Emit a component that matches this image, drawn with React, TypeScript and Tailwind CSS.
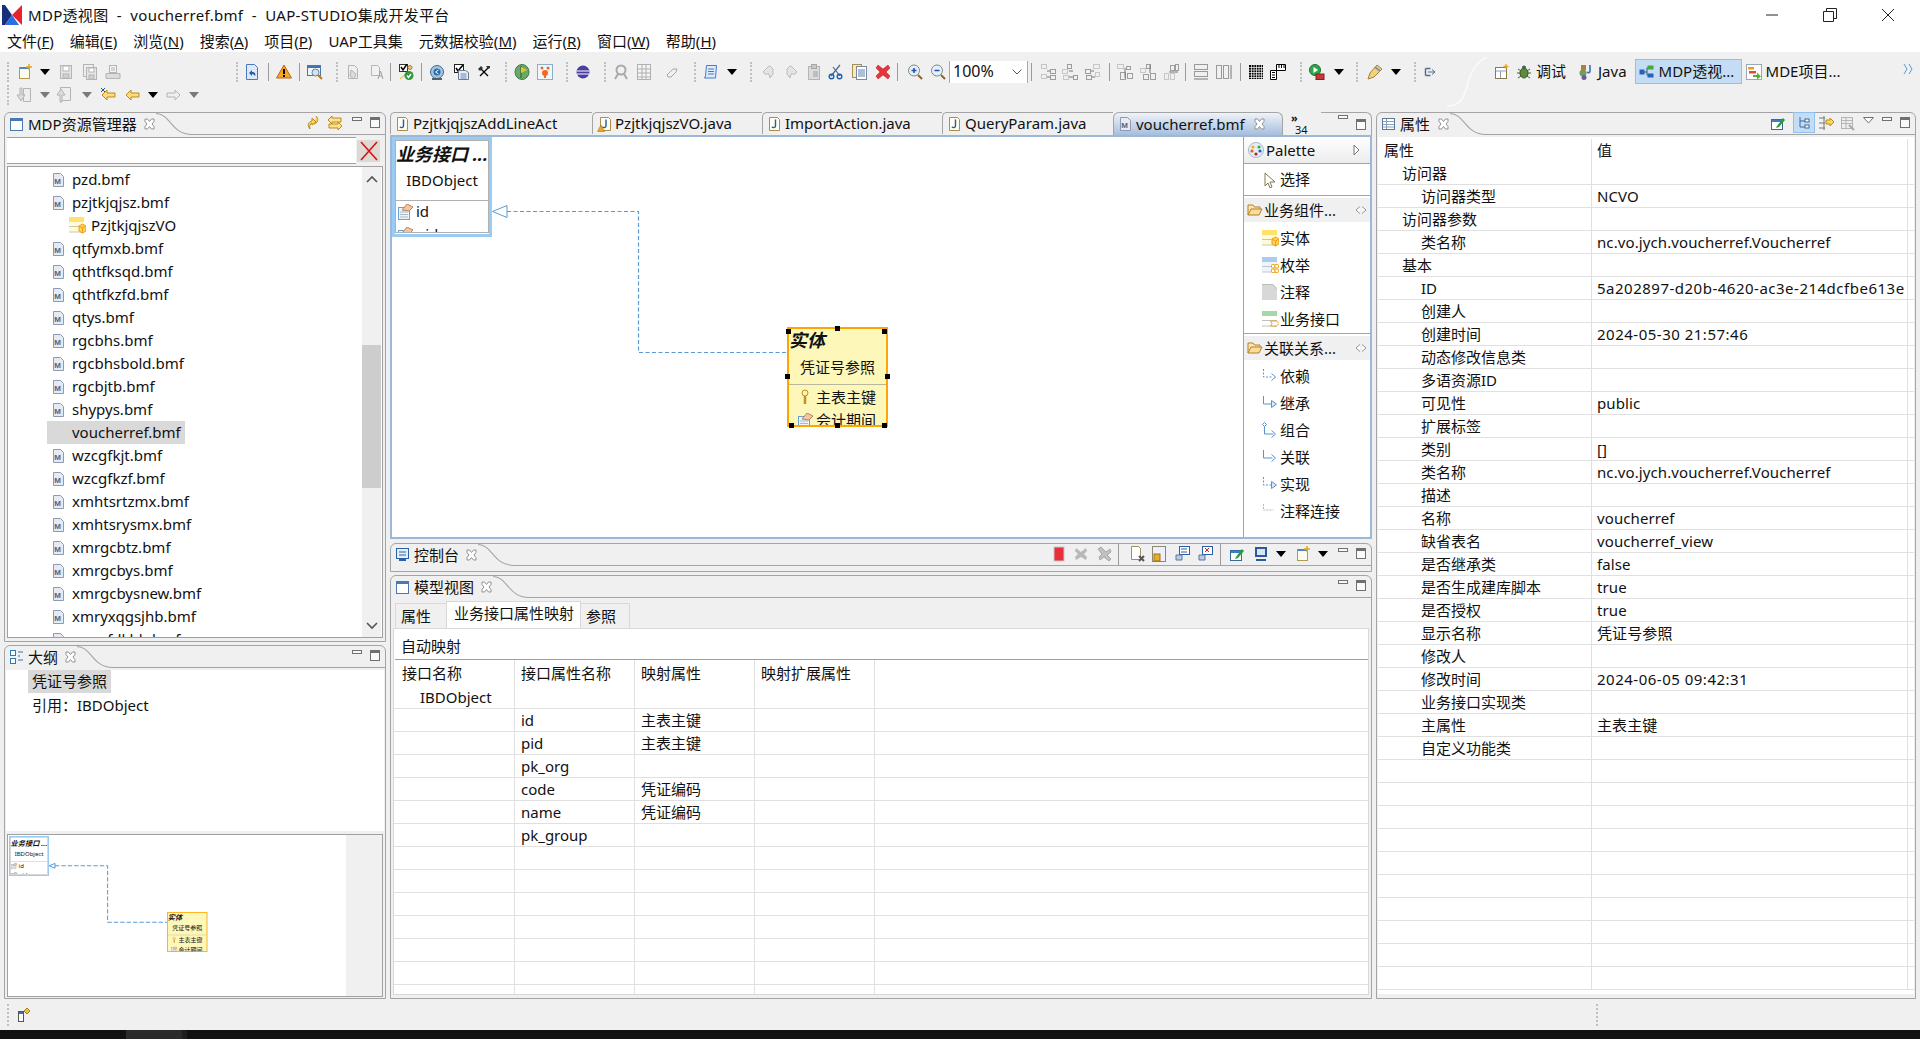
import React from 'react';

type C = { c?: string };
const S = ({ c = '', w = 16, h = 16, children }: { c?: string; w?: number; h?: number; children: React.ReactNode }) => (
  <svg width={w} height={h} viewBox={`0 0 ${w} ${h}`} className={`block shrink-0 ${c}`}>{children}</svg>
);
const mk = (body: React.ReactNode) => ({ c }: C) => <S c={c}>{body}</S>;

const Grip = ({ c = '' }: C) => <div className={`h-[20px] w-[2px] shrink-0 border-l-2 border-dotted border-[#c0c0c0] ${c}`} />;
const Sep = ({ c = '' }: C) => <div className={`h-[18px] w-[1px] shrink-0 bg-[#9a9a9a] ${c}`} />;
const Drop = ({ c = '', gray = false }: C & { gray?: boolean }) => (
  <S c={c} w={10} h={6}><path d="M0 0h10L5 6z" fill={gray ? '#7a7a7a' : '#000'} /></S>
);

const G = '#b4b4b4';
const NewFile = mk(<><rect x="2.5" y="3.5" width="10" height="11" fill="#fdfcec" stroke="#b39a50" /><rect x="3" y="3" width="9" height="2" fill="#4f86c6" /><path d="M12 0v6M9 3h6" stroke="#e0a820" strokeWidth="1.5" /></>);
const Save = mk(<><rect x="2.5" y="1.5" width="11" height="13" fill="#e6e6e6" stroke={G} /><rect x="5" y="2" width="6" height="5" fill="#fff" stroke={G} /><rect x="5" y="10" width="6" height="4" fill="#d0d0d0" stroke={G} /></>);
const SaveAll = mk(<><rect x="1.5" y="0.5" width="10" height="12" fill="#eee" stroke={G} /><rect x="4.5" y="3.5" width="10" height="12" fill="#e6e6e6" stroke={G} /><rect x="7" y="4" width="5" height="4" fill="#fff" stroke={G} /><rect x="7" y="11" width="5" height="4" fill="#d0d0d0" stroke={G} /></>);
const Print = mk(<><rect x="4.5" y="1.5" width="7" height="7" fill="#f4f4f4" stroke={G} /><path d="M1 9.5h14v5H1z" fill="#dcdcdc" stroke={G} /><path d="M6 4h4M6 6h4" stroke={G} /></>);
const DocUndo = mk(<><path d="M2.5.5h8l3 3v12h-11z" fill="#dde8f8" stroke="#4a78c0" /><path d="M5 9l3-3v2c3 0 4 2 3 4-1-1.500-2-2-3-2v2z" fill="#1f5fb0" /></>);
const Warn = mk(<><path d="M8 1l7.500 13H.5z" fill="#f6a623" stroke="#b8651a" /><rect x="7" y="5" width="2" height="5" /><rect x="7" y="11" width="2" height="2" /></>);
const SearchWin = mk(<><rect x="0.500" y="1.500" width="13" height="10" fill="#eef3fa" stroke="#4a78a8" /><rect x="1" y="2" width="12" height="2" fill="#3f74b0" /><circle cx="8.500" cy="8.500" r="3.500" fill="#cfe4f6" stroke="#70808c" /><path d="M11 11l4 4" stroke="#b87a20" strokeWidth="2" /></>);
const GrayHand = mk(<><path d="M3.500 1.500h6l3 3v10h-9z" fill="#eee" stroke={G} /><path d="M6 6l5 4-2 5-4-3z" fill="#ddd" stroke={G} /></>);
const GrayDocA = mk(<><path d="M2.500 1.500h6l2 2v8h-8z" fill="#f2f2f2" stroke={G} /><path d="M9 15l2.500-8 2.500 8M10 12h3" fill="none" stroke="#a0a0a0" /></>);
const CheckPair = mk(<><rect x="1.500" y="0.500" width="8" height="7" fill="#fff" stroke="#333" /><path d="M3 3l2 3 4-6" fill="none" stroke="#000" strokeWidth="1.500" /><circle cx="12" cy="3.500" r="2" fill="#e7d07a" stroke="#a08030" /><path d="M2 15l8-7" stroke="#d8b040" /><circle cx="11" cy="11.500" r="4.500" fill="#2a9a3a" /><path d="M9 11.500l1.500 2 2.500-3.500" fill="none" stroke="#fff" strokeWidth="1.500" /></>);
const Alarm = mk(<><circle cx="8" cy="8" r="6.500" fill="#9fc6e4" stroke="#3a6a94" /><circle cx="8" cy="8" r="3.500" fill="#2c6aa4" /><path d="M9.500 6l-3 2 3 2" fill="none" stroke="#fff" /><rect x="3" y="14" width="10" height="2" fill="#56606a" /></>);
const CheckDoc = mk(<><rect x="1.500" y="0.500" width="9" height="8" fill="#fff" stroke="#222" /><path d="M3 4l2 3 5-6" fill="none" stroke="#000" strokeWidth="1.500" /><path d="M5.500 6.500h7l3 2v7h-10z" fill="#e8eef6" stroke="#6a7a90" /><path d="M7.500 10h6M7.500 12h6M7.500 14h6" stroke="#6a88ac" /></>);
const Tools = mk(<><path d="M4 4l8 8M12 4l-8 8" stroke="#000" strokeWidth="1.300" /><path d="M2 5l3-3 2 2-3 3zM10 2h4v2l-2 1z" fill="#333" /></>);
const Leaf = mk(<><ellipse cx="8" cy="8" rx="7" ry="7.500" fill="#6aa86a" stroke="#3c7a4c" /><path d="M7 2v12" stroke="#2a5a30" /><path d="M7 3l6 3-6 3z" fill="#f2c318" /></>);
const OrangeBox = mk(<><rect x="0.500" y="0.500" width="15" height="15" fill="#f0f6fb" stroke="#8ab0cc" /><circle cx="8" cy="9" r="3" fill="#f2681f" /><circle cx="5" cy="4" r="1.500" fill="#f2681f" /><circle cx="11" cy="4" r="1.500" fill="#f2681f" /><path d="M8 9v5" stroke="#f2681f" strokeWidth="2" /></>);
const Globe = mk(<><circle cx="8" cy="8" r="6.500" fill="#4a3f9f" /><path d="M1.500 7h13M2 10h12" stroke="#fff" /></>);
const GrayFinder = mk(<><circle cx="8" cy="6" r="4.500" fill="#f0f0f0" stroke="#a8a8a8" strokeWidth="2" /><path d="M5 10l-3 5M11 10l3 5" stroke="#a8a8a8" strokeWidth="2" /></>);
const GrayGrid = mk(<><rect x="1.500" y="0.500" width="13" height="15" fill="#f4f4f4" stroke="#b0b0b0" /><path d="M6 1v14M10 1v14M2 5h12M2 9h12M2 13h12" stroke="#b0b0b0" /></>);
const GrayEraser = mk(<path d="M3 11l6-6h4l-1 3-5 5H4z" fill="#f0f0f0" stroke="#a8a8a8" />);
const Scroll = mk(<><path d="M3.500 1.500h10l-1 12.500H1.500l1-2z" fill="#dfeafa" stroke="#3f7ccc" /><path d="M5 5h6M5 7.500h6M5 10h6" stroke="#3f7ccc" /></>);
const UndoG = mk(<path d="M9 2l3 3v5l-3 4-1-4H4l-2-2 6-6z" fill="#e4e4e4" stroke="#bcbcbc" />);
const RedoG = mk(<path d="M7 2L4 5v5l3 4 1-4h4l2-2-6-6z" fill="#e4e4e4" stroke="#bcbcbc" />);
const Clip = mk(<><rect x="2.500" y="2.500" width="11" height="13" fill="#dcdcdc" stroke={G} /><rect x="5.500" y="0.500" width="5" height="4" fill="#c8c8c8" stroke="#a8a8a8" /><path d="M7 8h5M7 10h5M7 12h5" stroke="#a0a0a0" /></>);
const Scissors = mk(<><path d="M3 12L12 1M12 12L5 3" stroke="#4a6a8a" strokeWidth="1.200" /><circle cx="3.500" cy="12.500" r="2.300" fill="none" stroke="#1f5fb0" strokeWidth="1.400" /><circle cx="11.500" cy="12.500" r="2.300" fill="none" stroke="#1f5fb0" strokeWidth="1.400" /></>);
const CopyDoc = mk(<><rect x="0.500" y="0.500" width="9" height="13" fill="#f6e9c8" stroke="#a89050" /><rect x="4.500" y="2.500" width="10" height="13" fill="#fff" stroke="#7a8aa0" /><path d="M6 6h7M6 8h7M6 10h7M6 12h7" stroke="#5a80b0" /></>);
const RedX = mk(<path d="M3 1l5 4 5-4 2 3-4 4 4 4-2 3-5-4-5 4-2-3 4-4-4-4z" fill="#e8343c" stroke="#c02028" strokeWidth=".5" />);
const ZoomIn = mk(<><circle cx="7" cy="6.500" r="5.500" fill="#e6f0fa" stroke="#7c8a7c" /><path d="M4.500 6.500h5M7 4v5" stroke="#2050b0" strokeWidth="1.500" /><path d="M11 11l4 4" stroke="#8a6030" strokeWidth="2" /></>);
const ZoomOut = mk(<><circle cx="7" cy="6.500" r="5.500" fill="#e6f0fa" stroke="#7c8a7c" /><path d="M4.500 6.500h5" stroke="#2050b0" strokeWidth="1.500" /><path d="M11 11l4 4" stroke="#8a6030" strokeWidth="2" /></>);
const Box = ({ x, y, w = 4, h = 4, d = false }: { x: number; y: number; w?: number; h?: number; d?: boolean }) => (
  <rect x={x + 0.5} y={y + 0.5} width={w} height={h} fill="none" stroke="#9c9c9c" strokeDasharray={d ? '1 1' : undefined} />
);
const Align1 = mk(<><Box x={1} y={0} w={5} d /><Box x={10} y={5} w={5} /><Box x={1} y={10} w={5} d /><Box x={10} y={11} w={5} /><path d="M7 7h3M7 13h3" stroke="#777" /></>);
const Align2 = mk(<><Box x={5} y={0} /><Box x={0} y={5} w={5} d /><Box x={11} y={11} /><Box x={1} y={11} w={5} d /><path d="M7 7h4M7 13h4" stroke="#777" /></>);
const Align3 = mk(<><Box x={8} y={0} w={6} d /><Box x={0} y={5} w={5} /><Box x={10} y={8} d /><Box x={1} y={11} w={5} /><path d="M6 7h3M7 13h3" stroke="#777" /></>);
const Align4 = mk(<><Box x={0} y={0} w={6} d /><Box x={9} y={2} w={4} h={3} /><Box x={3} y={8} w={5} h={7} /><Box x={10} y={9} w={5} h={5} /><path d="M8 4v10" stroke="#777" /></>);
const Align5 = mk(<><Box x={6} y={0} /><Box x={0} y={4} w={5} d /><Box x={3} y={10} w={5} h={5} /><Box x={10} y={9} w={5} h={6} /><path d="M10 1v8" stroke="#777" /></>);
const Align6 = mk(<><Box x={7} y={1} w={4} h={5} /><Box x={12} y={0} w={3} h={6} /><Box x={1} y={9} w={4} h={6} d /><Box x={7} y={9} w={4} h={6} d /><path d="M6 8h9" stroke="#777" /></>);
const SizeH = mk(<><rect x="1.500" y="0.500" width="13" height="5" fill="none" stroke="#999" /><rect x="1.500" y="7.500" width="13" height="5" fill="none" stroke="#999" /><path d="M1 15h14" stroke="#777" /></>);
const SizeV = mk(<><rect x="0.500" y="1.500" width="5" height="13" fill="none" stroke="#999" /><rect x="7.500" y="1.500" width="5" height="13" fill="none" stroke="#999" /><path d="M15 1v14" stroke="#777" /></>);
const GridB = mk(<><rect x="1" y="1" width="14" height="14" /><path d="M3.500 1v14M6 1v14M8.500 1v14M11 1v14M13.500 1v14M1 3.500h14M1 6h14M1 8.500h14M1 11h14M1 13.500h14" stroke="#fff" strokeWidth=".7" /></>);
const Ruler = mk(<><path d="M.5 15.500V6.500h6v-6h9v6H6.500v9z" fill="#fff" stroke="#000" /><path d="M2 8.500h3M2 11h3M2 13.500h3M9 1v3M11.500 1v3M14 1v3" stroke="#000" /></>);
const RunTool = mk(<><circle cx="6" cy="6" r="5.500" fill="#2ea84a" stroke="#1c7030" /><path d="M4.500 3l4.500 3-4.500 3z" fill="#fff" /><rect x="7" y="10" width="8" height="5.500" fill="#c83838" stroke="#802020" /></>);
const Pen = mk(<><path d="M1 15l2-6 7-8 5 4-8 8z" fill="#f2d27c" stroke="#a88038" /><path d="M8 3l5 4" stroke="#7a96b0" strokeWidth="2" /></>);
const GoBox = mk(<><path d="M3.500 4.500h5M3.500 11.500h5M3.500 4.500v7" stroke="#52708a" strokeWidth="1.500" fill="none" /><path d="M6 8h7M10 5.500l3 2.500-3 2.500" stroke="#52708a" fill="none" /></>);
const OpenPersp = mk(<><rect x="1.500" y="3.500" width="11" height="11" fill="#fff" stroke="#8a7a50" /><path d="M2 7h10M6.500 7v7" stroke="#8aa0b8" /><path d="M12 0v5M9.500 2.500h5" stroke="#e0a820" strokeWidth="1.300" /></>);
const Bug = mk(<><ellipse cx="8" cy="9" rx="4" ry="5" fill="#5f8a3a" stroke="#38502a" /><circle cx="8" cy="3.500" r="2" fill="#3a6a40" /><path d="M2 5l3 2M14 5l-3 2M1 9h3M15 9h-3M2 14l3-2M14 14l-3-2" stroke="#4a5a3a" /></>);
const JavaP = mk(<><rect x="4" y="1" width="5" height="5" fill="#b87a40" /><circle cx="6" cy="9" r="3.500" fill="#7a9a58" /><circle cx="7" cy="13.500" r="2.500" fill="#6a5aa0" /><path d="M13 1v6c0 2-2 2-3 1" fill="none" stroke="#3a70b8" strokeWidth="1.600" /></>);
const MdpP = mk(<><rect x="0.500" y="5.500" width="5" height="5" fill="#2a60b8" /><rect x="8.500" y="1.500" width="6" height="4" fill="#4aa83a" /><rect x="8.500" y="9.500" width="6" height="4" fill="#2a60b8" /><path d="M5 8h3V3.500M8 8v3.500" stroke="#305880" fill="none" /></>);
const MdeP = mk(<><rect x="0.500" y="0.500" width="15" height="15" fill="#fff" stroke="#9aa8b8" /><rect x="2" y="3" width="6" height="2.500" fill="#e0a020" /><rect x="3" y="7" width="7" height="2.500" fill="#e04a30" /><path d="M7 11h4V8.500l4 4-4 3V13H7z" fill="#58b030" /></>);

const Chevron = ({ c = '' }: C) => <S c={c} w={12} h={12}><path d="M1 5l5-3 5 3M1 10l5-3 5 3" fill="none" stroke="#5a9ad8" transform="rotate(90 6 6)" /></S>;
const Min = ({ c = '' }: C) => <div className={`h-[4px] w-[10px] shrink-0 self-start border border-[#707070] bg-[#f8f8f8] ${c}`} />;
const Max = ({ c = '' }: C) => (
  <div className={`h-[11px] w-[10px] shrink-0 border border-[#707070] bg-[#fafafa] ${c}`}><div className="h-[2px] bg-[#707070]" /></div>
);
const Close = ({ c = '' }: C) => (
  <S c={c} w={13} h={13}><path d="M2 1h2.500L6.500 3.500 8.500 1H11v2.500L9 6l2 2.500V11H8.500l-2-2.500-2 2.500H2V8.500L4 6 2 3.500z" fill="#fff" stroke="#909090" /></S>
);

const Bmf = ({ c = '' }: C) => (
  <S c={c}>
    <path d="M2.500 1.500h7l3 3v10h-10z" fill="#e6eaf2" stroke="#8f9ab0" />
    <text x="3.200" y="12" fontSize="8" fontWeight="700" fill="#56627c" fontFamily="Liberation Sans">M</text>
  </S>
);
const JavaDoc = ({ c = '' }: C) => (
  <S c={c}>
    <path d="M2.500 1.500h8l2 2v11h-10z" fill="#fffef2" stroke="#a88c50" />
    <path d="M8.500 3.500V10c0 2-3 2-3.500.8" fill="none" stroke="#2a58a8" strokeWidth="1.400" />
  </S>
);
const WarnJava = ({ c = '' }: C) => (
  <S c={c}>
    <path d="M3.500 1.500h8l2 2v11h-10z" fill="#fffef2" stroke="#a88c50" />
    <path d="M9 3.500V10c0 2-3 2-3.500.8" fill="none" stroke="#2a58a8" strokeWidth="1.400" />
    <path d="M4 9l3.500 6.500H.5z" fill="#f0a820" stroke="#a87010" strokeWidth=".6" />
  </S>
);
const EntIcon = ({ c = '' }: C) => (
  <S c={c} w={17} h={17}>
    <rect x="0" y="0" width="15" height="15" fill="#fffbd8" />
    <rect x="0" y="0" width="15" height="5" fill="#fde26c" />
    <path d="M0 9.500h15M0 15h15" stroke="#c8c8b0" />
    <path d="M10 9l3.500-2 3.500 2v5l-3.500 2-3.500-2z" fill="#ffd35a" stroke="#f0a010" />
    <path d="M10 9l3.500 2 3.500-2M13.500 11v5" stroke="#f0a010" fill="none" />
  </S>
);
const EnumIcon = ({ c = '' }: C) => (
  <S c={c} w={17} h={17}>
    <rect x="0" y="0" width="15" height="15" fill="#eef4fb" />
    <rect x="0" y="0" width="15" height="5" fill="#a8cdf0" />
    <path d="M0 9.500h15M0 15h15" stroke="#c0c8d0" />
    <rect x="9.500" y="7.500" width="3.500" height="3.500" rx="1" fill="#fff" stroke="#f0a010" />
    <rect x="13" y="7.500" width="3.500" height="3.500" rx="1" fill="#fff" stroke="#f0a010" />
    <rect x="9.500" y="12" width="3.500" height="3.500" rx="1" fill="#fff" stroke="#f0a010" />
    <rect x="13" y="12" width="3.500" height="3.500" rx="1" fill="#fff" stroke="#f0a010" />
  </S>
);
const NoteIcon = ({ c = '' }: C) => (
  <S c={c} w={17} h={17}><path d="M0 0h11l4 4v12H0z" fill="#d8d8d8" /><path d="M0 .5h10.500l4 4H15" fill="none" stroke="#bbb" /></S>
);
const BizIcon = ({ c = '' }: C) => (
  <S c={c} w={17} h={17}>
    <rect x="0" y="0" width="15" height="15" fill="#fff" />
    <rect x="0" y="0" width="15" height="5" fill="#a6d7a6" />
    <path d="M0 9.500h15M0 15h15" stroke="#c0c0c0" />
    <path d="M8.500 10h6l2.500 2.500L14.500 15h-6l1.500-2.500z" fill="#fff" stroke="#f0a010" />
  </S>
);
const Folder = ({ c = '' }: C) => (
  <S c={c}>
    <path d="M1 13V3h5l1.500 2H13v2" fill="#fce8b4" stroke="#b47e28" />
    <path d="M1 13l3-6h11l-3 6z" fill="#fbdc98" stroke="#b47e28" />
  </S>
);
const Link = ({ kind, c = '' }: C & { kind: number }) => (
  <S c={c} w={16} h={17}>
    {kind === 5 ? (
      <path d="M1.500 1v6h10" fill="none" stroke="#b8b8b8" strokeDasharray="2 1" />
    ) : (
      <path d={kind === 2 ? 'M2.500 4v8h9' : 'M1.500 1v8h9'} fill="none" stroke="#5b93cf" strokeDasharray={kind === 0 || kind === 4 ? '2 1.500' : undefined} />
    )}
    {(kind === 1 || kind === 4) && <path d="M9.500 5.500l5 3.500-5 3.500z" fill="#dbe8f6" stroke="#5b93cf" />}
    {(kind === 0 || kind === 3) && <path d="M9.500 5.500l4 3.500-4 3.500" fill="none" stroke="#5b93cf" />}
    {kind === 2 && <><path d="M2.500.5l2 2-2 2-2-2z" fill="#fff" stroke="#5b93cf" /><path d="M9.500 8.500l4 3.500-4 3.500" fill="none" stroke="#5b93cf" /></>}
  </S>
);
const Attr = ({ c = '' }: C) => (
  <S c={c}>
    <rect x="1.500" y="3.500" width="11" height="12" fill="#eef4fb" stroke="#6aa0d0" />
    <path d="M3 8h8M3 10.500h8M3 13h8" stroke="#a8b8c8" />
    <path d="M5 6l5-6 6 3-4 4z" fill="#f2c6a0" stroke="#b88460" />
  </S>
);

const Handle = ({ c }: { c: string }) => <div className={`absolute h-[5px] w-[5px] bg-black ${c}`} />;

const Diagram = ({ selected = true }: { selected?: boolean }) => (
  <div className="relative h-[400px] w-[850px] text-[15px] leading-[23px]">
    <svg width="850" height="400" className="absolute left-0 top-0">
      <path d="M115 74.500H246.500V215.500H395" fill="none" stroke="#5b9bd5" strokeWidth={selected ? 1.2 : 2.6} strokeDasharray={selected ? '4 2.500' : '11 5'} />
      <path d="M100.500 74.500l14.500-6v12z" fill="#fff" stroke="#5b9bd5" strokeWidth={selected ? 1 : 2.5} />
    </svg>
    <div className="absolute left-0 top-0 h-[100px] w-[100px] border-[3px] border-[#99ccf4] bg-white">
      <div className="flex h-[93px] flex-col overflow-hidden border border-[#b0b0b0]">
        <div className="h-[60px] shrink-0 border-b border-[#b0b0b0]">
          <div className="whitespace-nowrap pt-[1px] text-center text-[18px] font-bold italic leading-[24px]">业务接口 ...</div>
          <div className="mt-[3px] text-center">IBDObject</div>
        </div>
        <div className="-mt-[1px] flex h-[23px] shrink-0 items-center"><Attr c="ml-[1px]" /><span className="ml-[3px]">id</span></div>
        <div className="flex h-[23px] shrink-0 items-center"><Attr c="ml-[1px]" /><span className="ml-[3px]">pid</span></div>
      </div>
    </div>
    <div className="absolute left-[395px] top-[190px] h-[100px] w-[101px] bg-[#fdf7ba] outline-2 -outline-offset-2 outline-[#ffa500]">
      <div className="flex h-full flex-col overflow-hidden px-[2px] pb-[2px]">
        <div className="h-[58px] shrink-0 border-b border-[#b8b8a0]">
          <div className="pt-[1px] text-[18px] font-bold italic leading-[24px]">实体</div>
          <div className="mt-[4px] text-center">凭证号参照</div>
        </div>
        <div className="flex h-[24px] shrink-0 items-center">
          <S c="ml-[10px]" w={12} h={16}><circle cx="6" cy="4" r="3" fill="#fff2b0" stroke="#c09020" /><path d="M6 7v8" stroke="#c09020" strokeWidth="2.500" /></S>
          <span className="ml-[5px]">主表主键</span>
        </div>
        <div className="flex h-[23px] shrink-0 items-center"><Attr c="ml-[8px]" /><span className="ml-[3px]">会计期间</span></div>
      </div>
      {selected && (
        <>
          <Handle c="-left-[1px] top-[2px]" /><Handle c="left-[48px] -top-[1px]" /><Handle c="right-[1px] top-[2px]" />
          <Handle c="-left-[2px] top-[47px]" /><Handle c="-right-[2px] top-[47px]" />
          <Handle c="left-[2px] -bottom-[1px]" /><Handle c="left-[48px] -bottom-[1px]" /><Handle c="right-[1px] -bottom-[1px]" />
        </>
      )}
    </div>
  </div>
);

const ViewHeader = ({ icon, label, close = 'ml-[10px]', curve = 'w-[34px]', children }: { icon: React.ReactNode; label: string; close?: string; curve?: string; children?: React.ReactNode }) => (
  <div className="flex h-[22px] shrink-0 rounded-t-[6px]">
    <div className="flex items-center pl-[4px]">
      {icon}
      <span className="ml-[3px]">{label}</span>
      <Close c={close} />
    </div>
    <svg viewBox="0 0 34 22" preserveAspectRatio="none" className={`h-[22px] shrink-0 ${curve}`}><path d="M0 .5C14 .5 14 21.500 34 21.500" fill="none" stroke="#a4a4a4" /></svg>
    <div className="flex flex-1 items-center justify-end border-b border-[#a4a4a4] pb-[2px]">{children}</div>
  </div>
);
const ViewIcon = ({ c = '' }: C) => (
  <S c={c}><rect x="1.500" y="2.500" width="12" height="12" fill="#fff" stroke="#4a78b0" /><rect x="2" y="3" width="11" height="2" fill="#4a78b0" /></S>
);

const files: [string, number][] = [
  ['pzd.bmf', 0], ['pzjtkjqjsz.bmf', 0], ['PzjtkjqjszVO', 1], ['qtfymxb.bmf', 0], ['qthtfksqd.bmf', 0], ['qthtfkzfd.bmf', 0],
  ['qtys.bmf', 0], ['rgcbhs.bmf', 0], ['rgcbhsbold.bmf', 0], ['rgcbjtb.bmf', 0], ['shypys.bmf', 0], ['voucherref.bmf', 0],
  ['wzcgfkjt.bmf', 0], ['wzcgfkzf.bmf', 0], ['xmhtsrtzmx.bmf', 0], ['xmhtsrysmx.bmf', 0], ['xmrgcbtz.bmf', 0], ['xmrgcbys.bmf', 0],
  ['xmrgcbysnew.bmf', 0], ['xmryxqgsjhb.bmf', 0], ['xmrzfdkhb.bmf', 0],
];

const props: [string, number, string][] = [
  ['访问器', 1, ''], ['访问器类型', 2, 'NCVO'], ['访问器参数', 1, ''], ['类名称', 2, 'nc.vo.jych.voucherref.Voucherref'], ['基本', 1, ''],
  ['ID', 2, '5a202897-d20b-4620-ac3e-214dcfbe613e'], ['创建人', 2, ''], ['创建时间', 2, '2024-05-30 21:57:46'], ['动态修改信息类', 2, ''],
  ['多语资源ID', 2, ''], ['可见性', 2, 'public'], ['扩展标签', 2, ''], ['类别', 2, '[]'], ['类名称', 2, 'nc.vo.jych.voucherref.Voucherref'],
  ['描述', 2, ''], ['名称', 2, 'voucherref'], ['缺省表名', 2, 'voucherref_view'], ['是否继承类', 2, 'false'], ['是否生成建库脚本', 2, 'true'],
  ['是否授权', 2, 'true'], ['显示名称', 2, '凭证号参照'], ['修改人', 2, ''], ['修改时间', 2, '2024-06-05 09:42:31'], ['业务接口实现类', 2, ''],
  ['主属性', 2, '主表主键'], ['自定义功能类', 2, ''],
  ...Array.from({ length: 10 }, () => ['', 2, ''] as [string, number, string]),
];

const mapRows = [
  ['id', '主表主键'], ['pid', '主表主键'], ['pk_org', ''], ['code', '凭证编码'], ['name', '凭证编码'], ['pk_group', ''],
  ['', ''], ['', ''], ['', ''], ['', ''], ['', ''], ['', ''], ['', ''],
];

const PaletteItem = ({ icon, label }: { icon: React.ReactNode; label: string }) => (
  <div className="flex h-[27px] items-center pl-[18px]"><span className="flex w-[18px] shrink-0">{icon}</span><span>{label}</span></div>
);
const GroupHead = ({ label }: { label: string }) => (
  <div className="mb-[3px] flex h-[24px] items-center bg-[#f0f0f0] pl-[3px]">
    <Folder />
    <span className="ml-[1px]">{label}</span>
    <S c="ml-auto mr-[3px]" w={12} h={8}><path d="M5 .5L1 4l4 3.500M7 .5L11 4 7 7.500" fill="#fff" stroke="#909090" /></S>
  </div>
);

const EditorTab = ({ icon, label, w }: { icon: React.ReactNode; label: string; w: string }) => (
  <div className={`flex h-[22px] shrink-0 items-center rounded-tl-[5px] border-l border-t border-[#a4a4a4] pl-[4px] ${w}`}>
    {icon}
    <span className="ml-[2px] whitespace-nowrap">{label}</span>
  </div>
);

export default function App() {
  return (
    <div className="flex h-[1039px] w-[1920px] flex-col overflow-hidden bg-[#f0f0f0] font-['Noto_Sans','Noto_Sans_CJK_SC',sans-serif] text-[15px] leading-[23px] text-[#111]">
      {/* title */}
      <div className="flex h-[30px] shrink-0 items-center bg-white">
        <S c="ml-[2px]" w={20} h={20}>
          <path d="M0 0h3l7 10-7 10H0z" fill="#16307a" />
          <path d="M3 0l7 10L3 20h14L10 10z" fill="#2b6fe0" />
          <path d="M20 0v20L10 10z" fill="#e8232e" />
        </S>
        <span className="ml-[6px] whitespace-pre tracking-[0.3px]">MDP透视图  -  voucherref.bmf  -  UAP-STUDIO集成开发平台</span>
        <div className="ml-auto flex pr-[3px]">
          <div className="flex w-[58px] justify-center"><S w={14} h={14}><path d="M1 7h12" stroke="#222" /></S></div>
          <div className="flex w-[58px] justify-center"><S w={14} h={14}><path d="M.5 3.500h10v10H.5zM3.500 3V.5h10v10H11" fill="none" stroke="#222" /></S></div>
          <div className="flex w-[58px] justify-center"><S w={14} h={14}><path d="M1 1l12 12M13 1L1 13" stroke="#222" /></S></div>
        </div>
      </div>
      {/* menu */}
      <div className="flex h-[22px] shrink-0 items-center bg-white pl-[7px]">
        {[
          ['文件(', 'F', ')'], ['编辑(', 'E', ')'], ['浏览(', 'N', ')'], ['搜索(', 'A', ')'], ['项目(', 'P', ')'], ['UAP工具集', '', ''], ['元数据校验(', 'M', ')'], ['运行(', 'R', ')'], ['窗口(', 'W', ')'], ['帮助(', 'H', ')'],
        ].map(([a, k, b]) => (
          <span key={a} className="mr-[16px] whitespace-nowrap">{a}<span className="underline">{k}</span>{b}</span>
        ))}
      </div>
      {/* toolbar */}
      <div className="relative h-[60px] shrink-0 pt-[8px]">
        <svg width="60" height="56" className="absolute left-[1442px] top-0"><path d="M5 54c28 0 12-36 40-49" fill="none" stroke="#fbfbfb" strokeWidth="1.500" /></svg>
        <div className="flex h-[23px] items-center">
          <Grip c="ml-[7px]" /><NewFile c="ml-[8px]" /><Drop c="ml-[7px]" /><Save c="ml-[8px]" /><SaveAll c="ml-[8px]" /><Print c="ml-[7px]" />
          <Grip c="ml-[115px]" /><DocUndo c="ml-[6px]" /><Sep c="ml-[8px]" /><Warn c="ml-[7px]" /><Sep c="ml-[7px]" /><SearchWin c="ml-[7px]" />
          <Grip c="ml-[13px]" /><GrayHand c="ml-[7px]" /><GrayDocA c="ml-[8px]" /><Sep c="ml-[5px]" /><CheckPair c="ml-[7px]" /><Sep c="ml-[7px]" />
          <Alarm c="ml-[7px]" /><CheckDoc c="ml-[8px]" /><Tools c="ml-[7px]" /><Grip c="ml-[13px]" /><Leaf c="ml-[7px]" /><OrangeBox c="ml-[7px]" />
          <Grip c="ml-[13px]" /><Globe c="ml-[7px]" /><Grip c="ml-[13px]" /><GrayFinder c="ml-[7px]" /><GrayGrid c="ml-[7px]" /><GrayEraser c="ml-[12px]" />
          <Grip c="ml-[14px]" /><Scroll c="ml-[7px]" /><Drop c="ml-[8px]" /><Grip c="ml-[13px]" /><UndoG c="ml-[9px]" /><RedoG c="ml-[6px]" />
          <Clip c="ml-[7px]" /><Scissors c="ml-[6px]" /><CopyDoc c="ml-[8px]" /><RedX c="ml-[7px]" /><Sep c="ml-[6px]" /><ZoomIn c="ml-[9px]" /><ZoomOut c="ml-[7px]" />
          <div className="ml-[3px] flex h-[22px] w-[79px] shrink-0 items-center border-x border-[#a8a8a8] bg-white pl-[3px] text-[16px]">
            100%
            <S c="ml-auto mr-[5px]" w={10} h={6}><path d="M.5.5L5 5 9.500.5" fill="none" stroke="#555" /></S>
          </div>
          <Sep c="ml-[3px]" /><Align1 c="ml-[8px]" /><Align2 c="ml-[6px]" /><Align3 c="ml-[7px]" /><Sep c="ml-[8px]" /><Align4 c="ml-[7px]" /><Align5 c="ml-[7px]" /><Align6 c="ml-[7px]" />
          <Sep c="ml-[6px]" /><SizeH c="ml-[7px]" /><SizeV c="ml-[7px]" /><Sep c="ml-[8px]" /><GridB c="ml-[7px]" /><Ruler c="ml-[6px]" />
          <Grip c="ml-[14px]" /><RunTool c="ml-[7px]" /><Drop c="ml-[9px]" /><Grip c="ml-[12px]" /><Pen c="ml-[9px]" /><Drop c="ml-[8px]" /><Grip c="ml-[13px]" /><GoBox c="ml-[6px]" />
          <OpenPersp c="ml-[56px]" /><Bug c="ml-[6px]" /><span className="ml-[4px] whitespace-nowrap">调试</span>
          <JavaP c="ml-[11px]" /><span className="ml-[5px]">Java</span>
          <div className="ml-[8px] flex h-[25px] w-[107px] shrink-0 items-center border border-[#90c0ee] bg-[#c4dcf4] pl-[3px]"><MdpP /><span className="ml-[4px] whitespace-nowrap">MDP透视...</span></div>
          <MdeP c="ml-[4px]" /><span className="ml-[4px] whitespace-nowrap">MDE项目...</span>
          <Chevron c="ml-[61px] -mt-[6px]" />
        </div>
        <div className="flex h-[23px] items-center">
          <Grip c="ml-[7px]" />
          <S c="ml-[7px]"><path d="M7.500 1.500h7v13h-7z" fill="#eee" stroke={G} /><path d="M4 1v7H1l4 6 4-6H6V1z" fill="#ddd" stroke={G} /></S>
          <Drop c="ml-[8px]" gray />
          <S c="ml-[6px]"><path d="M4.500 .5h10v13h-10z" fill="#eee" stroke={G} /><path d="M4 15V8H1l4-6 4 6H6v7z" fill="#ddd" stroke={G} /></S>
          <Drop c="ml-[10px]" gray />
          <S c="ml-[8px]"><path d="M7 3L2 8l5 5v-3h8V6H7z" fill="#ffdc7a" stroke="#b88a20" /><path d="M1 1l4 4M5 1L1 5" stroke="#2a50a0" /></S>
          <S c="ml-[8px]"><path d="M7 3L2 8l5 5v-3h8V6H7z" fill="#ffdc7a" stroke="#b88a20" /></S>
          <Drop c="ml-[8px]" />
          <S c="ml-[8px]"><path d="M9 3l5 5-5 5v-3H1V6h8z" fill="#eee" stroke={G} /></S>
          <Drop c="ml-[7px]" gray />
        </div>
      </div>

      {/* panels */}
      <div className="flex min-h-0 flex-1 pl-[4px] pr-[4px]">
        <div className="flex w-[382px] shrink-0 flex-col gap-[3px]">
          <div className="flex h-[530px] flex-col rounded-t-[6px] border border-[#a4a4a4]">
            <ViewHeader
              icon={<ViewIcon />}
              label="MDP资源管理器"
              curve="w-[36px]"
              close="ml-[6px]"
            >
              <S c="mr-[6px]"><path d="M5 14c-3-3-2-7 2-8V3l4 4-4 3V8c-2 1-3 3-2 6zM11 1c3 3 2 7-2 8" fill="#ffd65c" stroke="#b88a20" /></S>
              <S c="mr-[9px]"><path d="M5 1L1 5l4 4V7h9V3H5zM11 7l4 4-4 4v-2H2V9h9z" fill="#ffe28a" stroke="#b88a20" /></S>
              <Min c="mr-[8px] mt-[4px]" /><Max c="mr-[5px]" />
            </ViewHeader>
            <div className="mx-[2px] mt-[2px] flex h-[27px] shrink-0 items-center">
              <div className="h-full flex-1 border-y border-[#a0a0a0] bg-white" />
              <div className="ml-[1px] flex h-[22px] w-[23px] items-center justify-center bg-[#dcdad5]">
                <S w={18} h={20}><path d="M1 1l16 18M17 1L1 19" stroke="#e01010" strokeWidth="1.600" /></S>
              </div>
              <div className="w-[3px]" />
            </div>
            <div className="mx-[2px] mb-[3px] mt-[2px] flex min-h-0 flex-1 overflow-hidden border border-[#a0a0a0] bg-white">
              <div className="min-w-0 flex-1 overflow-hidden pt-[1px]">
                {files.map(([n, lv]) => (
                  <div key={n} className="flex h-[23px] items-center">
                    {lv === 0 ? <Bmf c="ml-[43px]" /> : <EntIcon c="ml-[61px]" />}
                    <span className={n === 'voucherref.bmf' ? '-ml-[20px] bg-[#d9d9d9] pl-[25px] pr-[4px]' : 'ml-[3px] pl-[2px]'}>{n}</span>
                  </div>
                ))}
              </div>
              <div className="mr-[1px] flex w-[19px] shrink-0 flex-col bg-[#f0f0f0]">
                <S c="mx-auto mt-[8px]" w={12} h={8}><path d="M1 7l5-5 5 5" fill="none" stroke="#555" strokeWidth="1.600" /></S>
                <div className="mt-[162px] h-[143px] shrink-0 bg-[#cdcdcd]" />
                <S c="mx-auto mt-[134px]" w={12} h={8}><path d="M1 1l5 5 5-5" fill="none" stroke="#555" strokeWidth="1.600" /></S>
              </div>
            </div>
          </div>
          <div className="flex h-[354px] flex-col rounded-t-[6px] border border-[#a4a4a4]">
            <ViewHeader
              icon={<S><rect x="1.500" y="1.500" width="5" height="5" fill="#fff" stroke="#2a78c0" /><rect x="1.500" y="9.500" width="5" height="5" fill="#fff" stroke="#2a78c0" /><path d="M9 3h5M9 7h2M9 11h5" stroke="#2a78c0" /></S>}
              label="大纲"
              curve="w-[36px]"
              close="ml-[6px]"
            >
              <Min c="mr-[8px] mt-[4px]" /><Max c="mr-[5px]" />
            </ViewHeader>
            <div className="mx-[1px] mt-[2px] h-[161px] shrink-0 bg-white pl-[22px]">
              <div className="w-fit bg-[#d9d9d9] px-[4px]">凭证号参照</div>
              <div className="pl-[4px] pt-[1px]">引用：IBDObject</div>
            </div>
            <div className="mx-[2px] mb-[1px] mt-[3px] flex min-h-0 flex-1 border border-[#a0a0a0] bg-white">
              <div className="min-w-0 flex-1 overflow-hidden pl-[1px] pt-[1px]">
                <div className="origin-top-left scale-[0.4]"><Diagram selected={false} /></div>
              </div>
              <div className="w-[36px] shrink-0 bg-[#f0f0f0]" />
            </div>
          </div>
        </div>

        <div className="ml-[4px] flex w-[982px] shrink-0 flex-col">
          <div className="flex h-[427px] shrink-0 flex-col">
            <div className="flex h-[23px] shrink-0">
              <EditorTab icon={<JavaDoc />} label="PzjtkjqjszAddLineAct" w="w-[202px]" />
              <EditorTab icon={<WarnJava />} label="PzjtkjqjszVO.java" w="w-[170px]" />
              <EditorTab icon={<JavaDoc />} label="ImportAction.java" w="w-[180px]" />
              <EditorTab icon={<JavaDoc />} label="QueryParam.java" w="w-[171px]" />
              <div className="flex h-[23px] w-[170px] shrink-0 items-center rounded-t-[6px] border-x border-t border-[#a4a4a4] bg-gradient-to-b from-[#eff3f9] to-[#a6bedb] pl-[4px]">
                <Bmf />
                <span className="ml-[2px]">voucherref.bmf</span>
                <Close c="ml-[8px]" />
              </div>
              <div className="ml-[8px] w-[30px] text-[11px] leading-[12px]">
                <div className="font-bold">»</div>
                <div className="pl-[4px]">34</div>
              </div>
              <div className="flex flex-1 items-center justify-end border-t border-[#a4a4a4] rounded-tr-[6px] border-r">
                <Min c="mr-[8px] mt-[2px]" /><Max c="mr-[5px]" />
              </div>
            </div>
            <div className="flex min-h-0 flex-1 border-[2px] border-[#9db8d6] bg-white">
              <div className="min-w-0 flex-1 overflow-hidden"><Diagram /></div>
              <div className="flex w-[127px] shrink-0 flex-col border-l border-[#a4a4a4]">
                <div className="flex h-[27px] items-center border-b border-[#a4a4a4] bg-gradient-to-b from-white to-[#ececec] pl-[4px]">
                  <S><circle cx="8" cy="8" r="7.500" fill="#e4eef8" stroke="#a8b8c8" /><circle cx="5" cy="5" r="1.600" fill="#f0b020" /><circle cx="11" cy="5" r="1.600" fill="#40a840" /><circle cx="4" cy="9" r="1.600" fill="#e86020" /><circle cx="12" cy="9" r="1.600" fill="#2060c0" /><circle cx="8" cy="12" r="1.600" fill="#c02020" /></S>
                  <span className="ml-[2px]">Palette</span>
                  <S c="ml-auto mr-[9px]" w={8} h={12}><path d="M1 1l5 5-5 5z" fill="#fff" stroke="#777" /></S>
                </div>
                <div className="flex h-[32px] items-center border-b border-[#a4a4a4] pl-[20px]">
                  <S w={14} h={16}><path d="M1 1l10 9H6l2 5-2 1-2-5-3 3z" fill="#fff" stroke="#807a50" /></S>
                  <span className="ml-[2px]">选择</span>
                </div>
                <div className="h-[2px]" />
                <GroupHead label="业务组件..." />
                <PaletteItem icon={<EntIcon />} label="实体" />
                <PaletteItem icon={<EnumIcon />} label="枚举" />
                <PaletteItem icon={<NoteIcon />} label="注释" />
                <PaletteItem icon={<BizIcon />} label="业务接口" />
                <div className="h-[3px] border-t border-[#a4a4a4]" />
                <GroupHead label="关联关系..." />
                <PaletteItem icon={<Link kind={0} />} label="依赖" />
                <PaletteItem icon={<Link kind={1} />} label="继承" />
                <PaletteItem icon={<Link kind={2} />} label="组合" />
                <PaletteItem icon={<Link kind={3} />} label="关联" />
                <PaletteItem icon={<Link kind={4} />} label="实现" />
                <PaletteItem icon={<Link kind={5} />} label="注释连接" />
              </div>
            </div>
          </div>

          <div className="mt-[4px] flex h-[29px] shrink-0 flex-col rounded-t-[6px] border border-[#a4a4a4]">
            <ViewHeader
              icon={<S><rect x="1.500" y="1.500" width="12" height="10" fill="#e4eefa" stroke="#2a60a8" /><path d="M4 5h7M4 8h7" stroke="#2a60a8" /><rect x="4" y="12" width="7" height="2" fill="#2a60a8" /></S>}
              label="控制台"
              curve="w-[36px]"
              close="ml-[6px]"
            >
              <S c="mr-[8px]" w={12} h={16}><rect x="1" y="1" width="10" height="14" fill="#e8303c" stroke="#c8c8c8" /></S>
              <S c="mr-[8px]"><path d="M3 2l5 4 5-4 1 3-3 3 3 3-1 3-5-3-5 3-1-3 3-3-3-3z" fill="#b8b8b8" /></S>
              <S c="mr-[5px]"><path d="M4 1l5 5 4-3 1 3-4 3 4 4-2 2-5-4-4 3-1-3 3-3-4-5z" fill="#c0c0c0" stroke="#a8a8a8" /></S>
              <Sep c="mr-[10px] !h-[22px]" />
              <S c="mr-[6px]"><path d="M2.500 .5h7l2 2v11h-9z" fill="#fff" stroke="#9a9060" /><path d="M10 10l5 5M15 10l-5 5" stroke="#555" strokeWidth="2" /></S>
              <S c="mr-[8px]"><rect x="1.500" y=".5" width="13" height="15" fill="#eef" stroke="#8a8a70" /><rect x="3" y="8" width="6" height="7" fill="#e8b020" stroke="#a07010" /></S>
              <S c="mr-[7px]"><rect x="4.500" y=".5" width="10" height="8" fill="#fff" stroke="#2a60a8" /><path d="M6 3h6M6 6h6" stroke="#2a60a8" /><path d="M1 9h6v5H1z" fill="#b8cce4" stroke="#5a7a9a" /></S>
              <S c="mr-[6px]"><rect x="4.500" y=".5" width="10" height="8" fill="#fff" stroke="#2a60a8" /><path d="M7 2l4 4M11 2L7 6" stroke="#e02020" /><path d="M1 9h6v5H1z" fill="#b8cce4" stroke="#5a7a9a" /></S>
              <Sep c="mr-[8px] !h-[22px]" />
              <S c="mr-[8px]"><rect x="1.500" y="4.500" width="11" height="10" fill="#fff" stroke="#3a6a9a" /><rect x="2" y="5" width="10" height="2" fill="#3a80c8" /><path d="M7 11l6-8 2 2-6 7-3 1z" fill="#2a9a3a" /></S>
              <S c="mr-[7px]"><rect x="2" y="1" width="12" height="10" fill="#2a5a9a" /><rect x="4" y="3" width="8" height="6" fill="#d8e6f6" /><rect x="3" y="13" width="10" height="2" fill="#2a5a9a" /></S>
              <Drop c="mr-[9px]" />
              <NewFile c="mr-[7px]" />
              <Drop c="mr-[10px]" />
              <Min c="mr-[8px] mt-[4px]" /><Max c="mr-[5px]" />
            </ViewHeader>
          </div>

          <div className="mt-[3px] flex min-h-0 flex-1 flex-col rounded-t-[6px] border border-[#a4a4a4]">
            <ViewHeader icon={<ViewIcon />} label="模型视图" curve="w-[36px]" close="ml-[6px]">
              <Min c="mr-[8px] mt-[4px]" /><Max c="mr-[5px]" />
            </ViewHeader>
            <div className="flex h-[30px] shrink-0 items-end pl-[4px]">
              <div className="flex h-[25px] w-[51px] items-center border-l border-t border-[#d8d8d8] pl-[5px]">属性</div>
              <div className="flex h-[27px] w-[135px] items-center border-x border-t border-[#d8d8d8] bg-white pb-[3px] pl-[7px]">业务接口属性映射</div>
              <div className="flex h-[25px] w-[49px] items-center border-r border-t border-[#d8d8d8] pl-[5px]">参照</div>
            </div>
            <div className="mx-[2px] mb-[3px] flex min-h-0 flex-1 flex-col border border-[#d8d8d8] bg-white">
              <div className="flex h-[30px] shrink-0 items-center pl-[7px] pt-[5px]">自动映射</div>
              <div className="ml-[1px] h-[1px] shrink-0 bg-[#a0a0a0]" />
              <div className="min-h-0 flex-1 overflow-hidden">
                <div className="flex h-[49px] border-b border-[#e0e0e0] pl-[1px]">
                  <div className="w-[120px] shrink-0 border-r border-[#e0e0e0] pl-[7px] pt-[2px]">
                    <div>接口名称</div>
                    <div className="pl-[18px] pt-[1px]">IBDObject</div>
                  </div>
                  <div className="w-[120px] shrink-0 border-r border-[#e0e0e0] pl-[6px] pt-[2px]">接口属性名称</div>
                  <div className="w-[120px] shrink-0 border-r border-[#e0e0e0] pl-[6px] pt-[2px]">映射属性</div>
                  <div className="w-[120px] shrink-0 border-r border-[#e0e0e0] pl-[6px] pt-[2px]">映射扩展属性</div>
                </div>
                {mapRows.map(([a, b], i) => (
                  <div key={i} className="flex h-[23px] border-b border-[#e0e0e0] pl-[1px]">
                    <div className="w-[120px] shrink-0 border-r border-[#e0e0e0]" />
                    <div className="w-[120px] shrink-0 border-r border-[#e0e0e0] pl-[6px]">{a}</div>
                    <div className="w-[120px] shrink-0 border-r border-[#e0e0e0] pl-[6px]">{b}</div>
                    <div className="w-[120px] shrink-0 border-r border-[#e0e0e0]" />
                  </div>
                ))}
              </div>
            </div>
          </div>
        </div>

        <div className="ml-[4px] flex min-w-0 flex-1 flex-col rounded-t-[6px] border border-[#a4a4a4]">
          <ViewHeader
            icon={<S><rect x="1.500" y="2.500" width="12" height="11" fill="#fff" stroke="#5a7a9a" /><path d="M2 5.500h11M2 8.500h11M2 11h11M5.500 3v10" stroke="#8aa0b8" /></S>}
            label="属性"
            curve="w-[36px]"
            close="ml-[7px]"
          >
            <S c="mr-[7px]"><rect x="1.500" y="4.500" width="11" height="10" fill="#fff" stroke="#3a6a9a" /><rect x="2" y="5" width="10" height="2" fill="#3a80c8" /><path d="M7 11l6-8 2 2-6 7-3 1z" fill="#2a9a3a" /></S>
            <div className="mr-[3px] flex h-[21px] w-[22px] items-center justify-center border border-[#90c0ee] bg-[#c4dcf4]">
              <S w={12} h={14}><path d="M2 1v10h6M2 5h6" fill="none" stroke="#3a6a9a" /><rect x="7" y="3" width="4" height="3" fill="#fff" stroke="#3a6a9a" /><rect x="7" y="9" width="4" height="3" fill="#fff" stroke="#3a6a9a" /></S>
            </div>
            <S c="mr-[6px]"><path d="M1 3h6M1 8h6M1 13h6M6 1v14" stroke="#777" /><path d="M8 5h4V3l4 4-4 4V9H8z" fill="#ffd65c" stroke="#b88a20" /></S>
            <S c="mr-[7px]"><rect x="1.500" y="2.500" width="11" height="11" fill="#eee" stroke={G} /><path d="M2 5.500h10M2 8.500h10M6 3v10" stroke={G} /><path d="M9 10l5 5" stroke="#a8a8a8" strokeWidth="2" /></S>
            <S c="mr-[8px] -mt-[4px]" w={11} h={7}><path d="M.5.5h10L5.500 6z" fill="#fff" stroke="#707070" /></S>
            <Min c="mr-[8px] mt-[4px]" /><Max c="mr-[5px]" />
          </ViewHeader>
          <div className="mx-[1px] mb-[4px] mt-[2px] min-h-0 flex-1 overflow-hidden bg-white pt-[2px]">
            <div className="flex h-[23px]">
              <div className="w-[214px] shrink-0 border-r border-[#e0e0e0] pl-[6px]">属性</div>
              <div className="w-[316px] shrink-0 border-r border-[#e0e0e0] pl-[5px]">值</div>
            </div>
            {props.map(([k, lv, v], i) => (
              <div key={i} className="flex h-[23px] border-b border-[#e0e0e0]">
                <div className={`w-[214px] shrink-0 whitespace-nowrap border-r border-[#e0e0e0] ${lv === 1 ? 'pl-[24px]' : 'pl-[43px]'}`}>{k}</div>
                <div className={`w-[316px] shrink-0 whitespace-nowrap border-r border-[#e0e0e0] pl-[5px] ${/\d/.test(v) ? 'tracking-[0.5px]' : 'tracking-[0.1px]'}`}>{v}</div>
              </div>
            ))}
          </div>
        </div>
      </div>

      {/* status */}
      <div className="flex h-[31px] shrink-0 items-center">
        <Grip c="ml-[7px] !h-[22px]" />
        <S c="ml-[8px]" w={14} h={14}><rect x="1.500" y="3.500" width="5" height="10" fill="#fff" stroke="#555" /><rect x="2" y="4" width="4" height="2" fill="#3a70b8" /><path d="M10 0l3 3-3 3-3-3z" fill="#f0c040" stroke="#a88020" /></S>
        <Grip c="ml-[1565px] !h-[22px]" />
      </div>
      <div className="flex h-[9px] shrink-0 bg-[#111111]">
        <div className="ml-[126px] h-full w-[56px] bg-[#2b2b2b]" />
        <div className="h-full w-[5px] bg-[#1e1e1e]" />
      </div>
    </div>
  );
}
